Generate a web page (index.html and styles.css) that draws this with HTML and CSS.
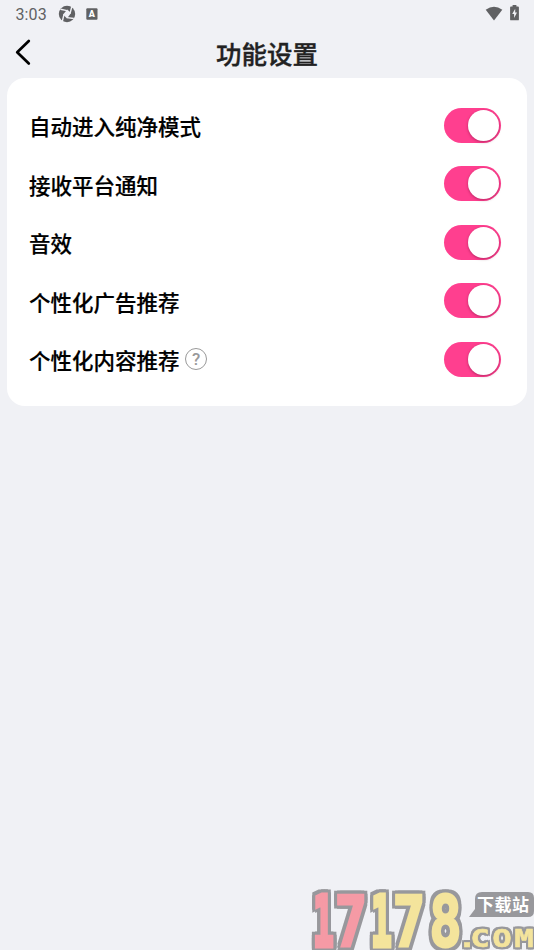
FILE: index.html
```html
<!DOCTYPE html>
<html lang="zh-CN">
<head>
<meta charset="utf-8">
<meta name="viewport" content="width=device-width, initial-scale=1">
<title>功能设置</title>
<link rel="stylesheet" href="styles.css">
</head>
<body>
<div class="status">
  <span class="time">3:03</span>
  <svg class="aperture" width="18" height="18" viewBox="0 0 18 18">
    <circle cx="9" cy="9" r="8.2" fill="#606163"/>
    <path d="M9.3 4.5 13 8 9 13.5 5 9.5Z" fill="#f0f1f5"/>
    <path d="M2.5 4.3 9 5.6M13.7 2 12 8.7M15.8 13.5 9 12.6M4.4 16 6 9.3" stroke="#f0f1f5" stroke-width="1.4"/>
  </svg>
  <svg class="abox" width="12" height="12" viewBox="0 0 12 12">
    <rect x=".3" y=".3" width="11.2" height="11.4" rx="1" fill="#606163"/>
    <text class="abox-letter" x="5.9" y="9.1" text-anchor="middle">A</text>
  </svg>
  <span class="spacer"></span>
  <svg class="wifi" width="18" height="15" viewBox="0 0 18 15"><path d="M.7 3.7Q9-2.2 17.3 3.7L9 14.5Z" fill="#606163"/></svg>
  <svg class="battery" width="9" height="16" viewBox="0 0 9 16"><path d="M2.6 0h3.8v1.5H8q.9 0 .9.9v12q0 .9-.9.9H1q-.9 0-.9-.9v-12q0-.9.9-.9h1.6Z" fill="#606163"/><path d="M5.2 3.7 2.2 9h1.9v4L7 7.6H5.2Z" fill="#f0f1f5"/></svg>
</div>
<header class="header">
  <svg class="back" width="18" height="28" viewBox="0 0 18 28"><path d="M14.8 3 3.2 14.2 14.8 25.5" fill="none" stroke="#000" stroke-width="2.7" stroke-linecap="round" stroke-linejoin="round"/></svg>
  <h1 class="title">功能设置</h1>
</header>
<main class="card">
  <div class="row"><span class="label">自动进入纯净模式</span><span class="switch"><i class="knob"></i></span></div>
  <div class="row"><span class="label">接收平台通知</span><span class="switch"><i class="knob"></i></span></div>
  <div class="row"><span class="label">音效</span><span class="switch"><i class="knob"></i></span></div>
  <div class="row"><span class="label">个性化广告推荐</span><span class="switch"><i class="knob"></i></span></div>
  <div class="row"><span class="label">个性化内容推荐</span><span class="help">?</span><span class="switch"><i class="knob"></i></span></div>
</main>
<svg class="brand" width="230" height="66" viewBox="304 884 230 66">
  <g class="digits">
    <text class="red one" transform="translate(323.5 945.5) scale(.5 1)">1</text>
    <text class="red" transform="translate(351 945.5) scale(.78 1)">7</text>
    <text class="yellow one" transform="translate(381.5 945.5) scale(.5 1)">1</text>
    <text class="yellow" transform="translate(409 945.5) scale(.78 1)">7</text>
    <text class="yellow" transform="translate(445.5 945.5) scale(.77 1)">8</text>
  </g>
  <path d="M482 892H528Q534 892 534 898V911Q534 917 528 917H469L475 909V899Q475 892 482 892Z" fill="#98989c"/>
  <text class="badge" x="477" y="911" textLength="52">下载站</text>
  <g class="domain">
    <text class="yellow" transform="scale(1.3 1)" y="947" x="351.7 361.7 378.7 395.6">.COM</text>
  </g>
</svg>
</body>
</html>
```
FILE: styles.css
```css
* { box-sizing: border-box; }
body {
  margin: 0;
  height: 950px;
  overflow: hidden;
  background: #f0f1f5;
  font-family: Roboto, "Noto Sans CJK SC", sans-serif;
}
.status {
  display: flex;
  align-items: center;
  height: 28px;
  padding: 0 15.5px;
}
.time { width: 42.5px; font-size: 16px; color: #606163; letter-spacing: .1px; }
.abox { margin-left: 10px; }
.abox-letter { font: 900 9px Roboto, sans-serif; fill: #fff; }
.spacer { flex: 1; }
.wifi { margin: 0 7px 2px 0; }
.battery { margin-bottom: 3px; }
.header {
  display: grid;
  grid-template-columns: 60px 1fr 60px;
  align-items: center;
  height: 50px;
}
.back { margin: -2px 0 0 14px; }
.title {
  margin: 0;
  padding-top: 3px;
  text-align: center;
  font-size: 25.5px;
  line-height: 38px;
  font-weight: 500;
  color: #222;
  -webkit-text-stroke: .35px #222;
}
.card {
  margin: 0 7px;
  height: 328px;
  padding: 18px 26px 0 22px;
  border-radius: 18px;
  background: #fff;
}
.row { display: flex; align-items: center; height: 58.5px; }
.label {
  padding-top: 6px;
  font-size: 21.5px;
  line-height: 32px;
  font-weight: 500;
  color: #000;
  -webkit-text-stroke: .2px #000;
}
.help {
  width: 22px;
  height: 22px;
  margin-left: 5.5px;
  border: 1.5px solid #999;
  border-radius: 50%;
  color: #999;
  font-size: 17px;
  font-weight: 500;
  line-height: 20px;
  text-align: center;
}
.switch {
  width: 57px;
  height: 35px;
  margin-left: auto;
  padding: 2px;
  border-radius: 18px;
  background: #ff3f8f;
}
.knob {
  display: block;
  width: 31px;
  height: 31px;
  margin-left: auto;
  border-radius: 50%;
  background: #fff;
  box-shadow: 0 1px 3px rgba(80, 0, 35, .4);
}
.brand { position: absolute; right: 0; bottom: 0; overflow: visible; }
.digits {
  font: 700 69px "DejaVu Sans Mono", monospace;
  text-anchor: middle;
  stroke-width: 3px;
  filter: drop-shadow(3px 0 #98989c) drop-shadow(-3px 0 #98989c) drop-shadow(0 3px #98989c) drop-shadow(0 -3px #98989c);
}
.one { stroke-width: 5px; }
.domain {
  font: 700 25px "DejaVu Sans Mono", monospace;
  stroke-width: .5px;
  filter: drop-shadow(2px 0 #98989c) drop-shadow(-2px 0 #98989c) drop-shadow(0 2px #98989c) drop-shadow(0 -2px #98989c);
}
.red { fill: #f59aa5; stroke: #f59aa5; }
.yellow { fill: #f4e49c; stroke: #f4e49c; }
.badge { font: 700 17px "Noto Sans CJK SC", sans-serif; fill: #fff; }
```
